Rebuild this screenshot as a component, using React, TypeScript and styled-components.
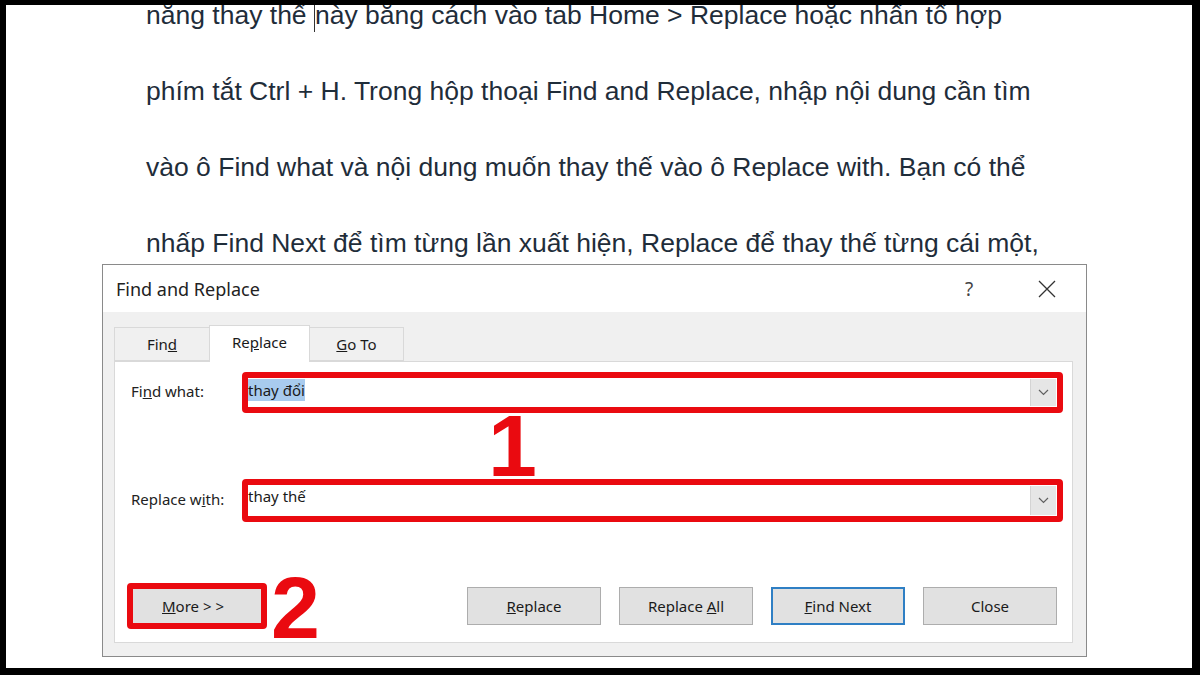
import React from "react";
import styled, { createGlobalStyle } from "styled-components";

const GlobalStyle = createGlobalStyle`
  html, body {
    margin: 0;
    padding: 0;
    background: #ffffff;
  }
`;

const RED = "#ea0a10";
const UI_FONT = `"Segoe UI", "Noto Sans", "Open Sans", sans-serif`;

const Frame = styled.div`
  position: relative;
  width: 1200px;
  height: 675px;
  box-sizing: border-box;
  border-style: solid;
  border-color: #000;
  border-width: 5px 8px 7px 6px;
  background: #fff;
  overflow: hidden;
`;

const Doc = styled.div`
  margin-top: -28px;
  padding-left: 140px;
  font-family: "Liberation Sans", Arial, sans-serif;
  font-size: 26.5px;
  color: #1f2d3a;
`;

const Line = styled.p`
  margin: 0;
  height: 76px;
  line-height: 76px;
  white-space: nowrap;
`;

const Caret = styled.span`
  display: inline-block;
  width: 0;
  height: 30px;
  border-left: 1px solid #333;
  vertical-align: middle;
`;

const Dialog = styled.div`
  position: absolute;
  left: 96px;
  top: 259px;
  width: 985px;
  height: 393px;
  box-sizing: border-box;
  border: 1px solid #8a8a8a;
  display: flex;
  flex-direction: column;
  font-family: ${UI_FONT};
  color: #1a1a1a;
  background: #f0f0f0;
`;

const TitleBar = styled.div`
  height: 47px;
  flex: none;
  background: #fff;
  display: flex;
  align-items: center;
  padding-left: 13px;
  padding-right: 19px;
`;

const TitleText = styled.div`
  font-size: 18px;
  flex: 1;
  color: #222;
`;

const TitleButton = styled.div<{ $gap?: number }>`
  width: 40px;
  margin-right: ${({ $gap }) => $gap ?? 0}px;
  display: flex;
  align-items: center;
  justify-content: center;
  font-size: 19px;
  color: #444;
`;

const Body = styled.div`
  flex: 1;
  display: flex;
  flex-direction: column;
  padding: 13px 13px 13px 11px;
`;

const Tabs = styled.div`
  height: 36px;
  display: flex;
  align-items: flex-end;
  padding-left: 1px;
`;

const Tab = styled.div<{ $active?: boolean; $w: number }>`
  width: ${({ $w }) => $w}px;
  box-sizing: border-box;
  height: ${({ $active }) => ($active ? 37 : 34)}px;
  margin-bottom: ${({ $active }) => ($active ? -1 : 0)}px;
  background: ${({ $active }) => ($active ? "#fff" : "#f0f0f0")};
  border: 1px solid #d9d9d9;
  border-bottom: ${({ $active }) => ($active ? "none" : "1px solid #d9d9d9")};
  margin-left: -1px;
  display: flex;
  align-items: center;
  justify-content: center;
  font-size: 15px;
  position: relative;
  z-index: ${({ $active }) => ($active ? 2 : 1)};
  padding-bottom: ${({ $active }) => ($active ? 4 : 0)}px;
`;

const Panel = styled.div`
  position: relative;
  flex: 1;
  background: #fff;
  border: 1px solid #d9d9d9;
  display: flex;
  flex-direction: column;
  padding: 10px 9px 13px 11px;
`;

const FieldRow = styled.div<{ $mt: number }>`
  display: flex;
  align-items: center;
  margin-top: ${({ $mt }) => $mt}px;
`;

const Label = styled.div`
  width: 116px;
  padding-left: 5px;
  box-sizing: border-box;
  font-size: 15px;
  color: #222;
  padding-bottom: 4px;
`;

const RedBox = styled.div`
  border: 6px solid ${RED};
  border-radius: 4px;
  box-sizing: border-box;
  display: flex;
`;

const FieldBox = styled(RedBox)<{ $h: number }>`
  flex: 1;
  height: ${({ $h }) => $h}px;
`;

const Combo = styled.div`
  flex: 1;
  display: flex;
  align-items: stretch;
  background: #fff;
`;

const ComboText = styled.div`
  flex: 1;
  display: flex;
  align-items: flex-start;
  padding-top: 1px;
  font-size: 15px;
  color: #1a1a1a;
`;

const Selected = styled.span`
  background: #a8cbee;
  line-height: 22px;
`;

const DropButton = styled.div`
  width: 25px;
  margin: 1px 1px 1px 0;
  background: #e6e6e6;
  border-left: 1px solid #d4d4d4;
  display: flex;
  align-items: center;
  justify-content: center;
`;

const Number = styled.div`
  position: absolute;
  font-family: "Liberation Sans", Arial, sans-serif;
  font-weight: 700;
  font-size: 88px;
  line-height: 1;
  color: ${RED};
`;

const Spacer = styled.div`
  flex: 1;
`;

const ButtonRow = styled.div`
  display: flex;
  align-items: center;
`;

const MoreBox = styled(RedBox)`
  width: 140px;
  height: 46px;
  margin-left: 1px;
`;

const Button = styled.div<{ $primary?: boolean }>`
  width: 134px;
  height: 38px;
  box-sizing: border-box;
  background: #e1e1e1;
  border: ${({ $primary }) => ($primary ? "2px solid #2f7fc4" : "1px solid #adadad")};
  display: flex;
  align-items: center;
  justify-content: center;
  font-size: 15px;
  color: #1a1a1a;
`;

const MoreButton = styled(Button)`
  flex: 1;
  height: auto;
  border: none;
  padding-right: 8px;
`;

const ActionGroup = styled.div`
  margin-left: auto;
  margin-right: 6px;
  display: flex;
  gap: 18px;
`;

const ChevronDown = () => (
  <svg width="11" height="7" viewBox="0 0 11 7">
    <path d="M1 1 L5.5 5.5 L10 1" fill="none" stroke="#606060" strokeWidth="1.2" />
  </svg>
);

const CloseIcon = () => (
  <svg width="18" height="18" viewBox="0 0 18 18">
    <path d="M1 1 L17 17 M17 1 L1 17" stroke="#333" strokeWidth="1.3" />
  </svg>
);

export default function App() {
  return (
    <>
      <GlobalStyle />
      <Frame>
        <Doc>
          <Line>
            năng thay thế <Caret />này bằng cách vào tab Home &gt; Replace hoặc nhấn tổ hợp
          </Line>
          <Line>phím tắt Ctrl + H. Trong hộp thoại Find and Replace, nhập nội dung cần tìm</Line>
          <Line>vào ô Find what và nội dung muốn thay thế vào ô Replace with. Bạn có thể</Line>
          <Line>nhấp Find Next để tìm từng lần xuất hiện, Replace để thay thế từng cái một,</Line>
          <Line>hoặc Replace All để thay thế tất cả cùng lúc.</Line>
        </Doc>

        <Dialog>
          <TitleBar>
            <TitleText>Find and Replace</TitleText>
            <TitleButton $gap={38}>?</TitleButton>
            <TitleButton>
              <CloseIcon />
            </TitleButton>
          </TitleBar>

          <Body>
            <Tabs>
              <Tab $w={96}>
                <span>
                  Fin<u>d</u>
                </span>
              </Tab>
              <Tab $w={101} $active>
                <span>
                  Re<u>p</u>lace
                </span>
              </Tab>
              <Tab $w={95}>
                <span>
                  <u>G</u>o To
                </span>
              </Tab>
            </Tabs>

            <Panel>
              <FieldRow $mt={0}>
                <Label>
                  Fi<u>n</u>d what:
                </Label>
                <FieldBox $h={41}>
                  <Combo>
                    <ComboText>
                      <Selected>thay đổi</Selected>
                    </ComboText>
                    <DropButton>
                      <ChevronDown />
                    </DropButton>
                  </Combo>
                </FieldBox>
              </FieldRow>

              <FieldRow $mt={66}>
                <Label>
                  Replace w<u>i</u>th:
                </Label>
                <FieldBox $h={43}>
                  <Combo>
                    <ComboText>thay thế</ComboText>
                    <DropButton>
                      <ChevronDown />
                    </DropButton>
                  </Combo>
                </FieldBox>
              </FieldRow>

              <Number style={{ left: 373, top: 40 }}>1</Number>

              <Spacer />

              <ButtonRow>
                <MoreBox>
                  <MoreButton>
                    <span>
                      <u>M</u>ore &gt; &gt;
                    </span>
                  </MoreButton>
                </MoreBox>
                <ActionGroup>
                  <Button>
                    <span>
                      <u>R</u>eplace
                    </span>
                  </Button>
                  <Button>
                    <span>
                      Replace <u>A</u>ll
                    </span>
                  </Button>
                  <Button $primary>
                    <span>
                      <u>F</u>ind Next
                    </span>
                  </Button>
                  <Button>
                    <span>Close</span>
                  </Button>
                </ActionGroup>
              </ButtonRow>

              <Number style={{ left: 156, top: 202 }}>2</Number>
            </Panel>
          </Body>
        </Dialog>
      </Frame>
    </>
  );
}
